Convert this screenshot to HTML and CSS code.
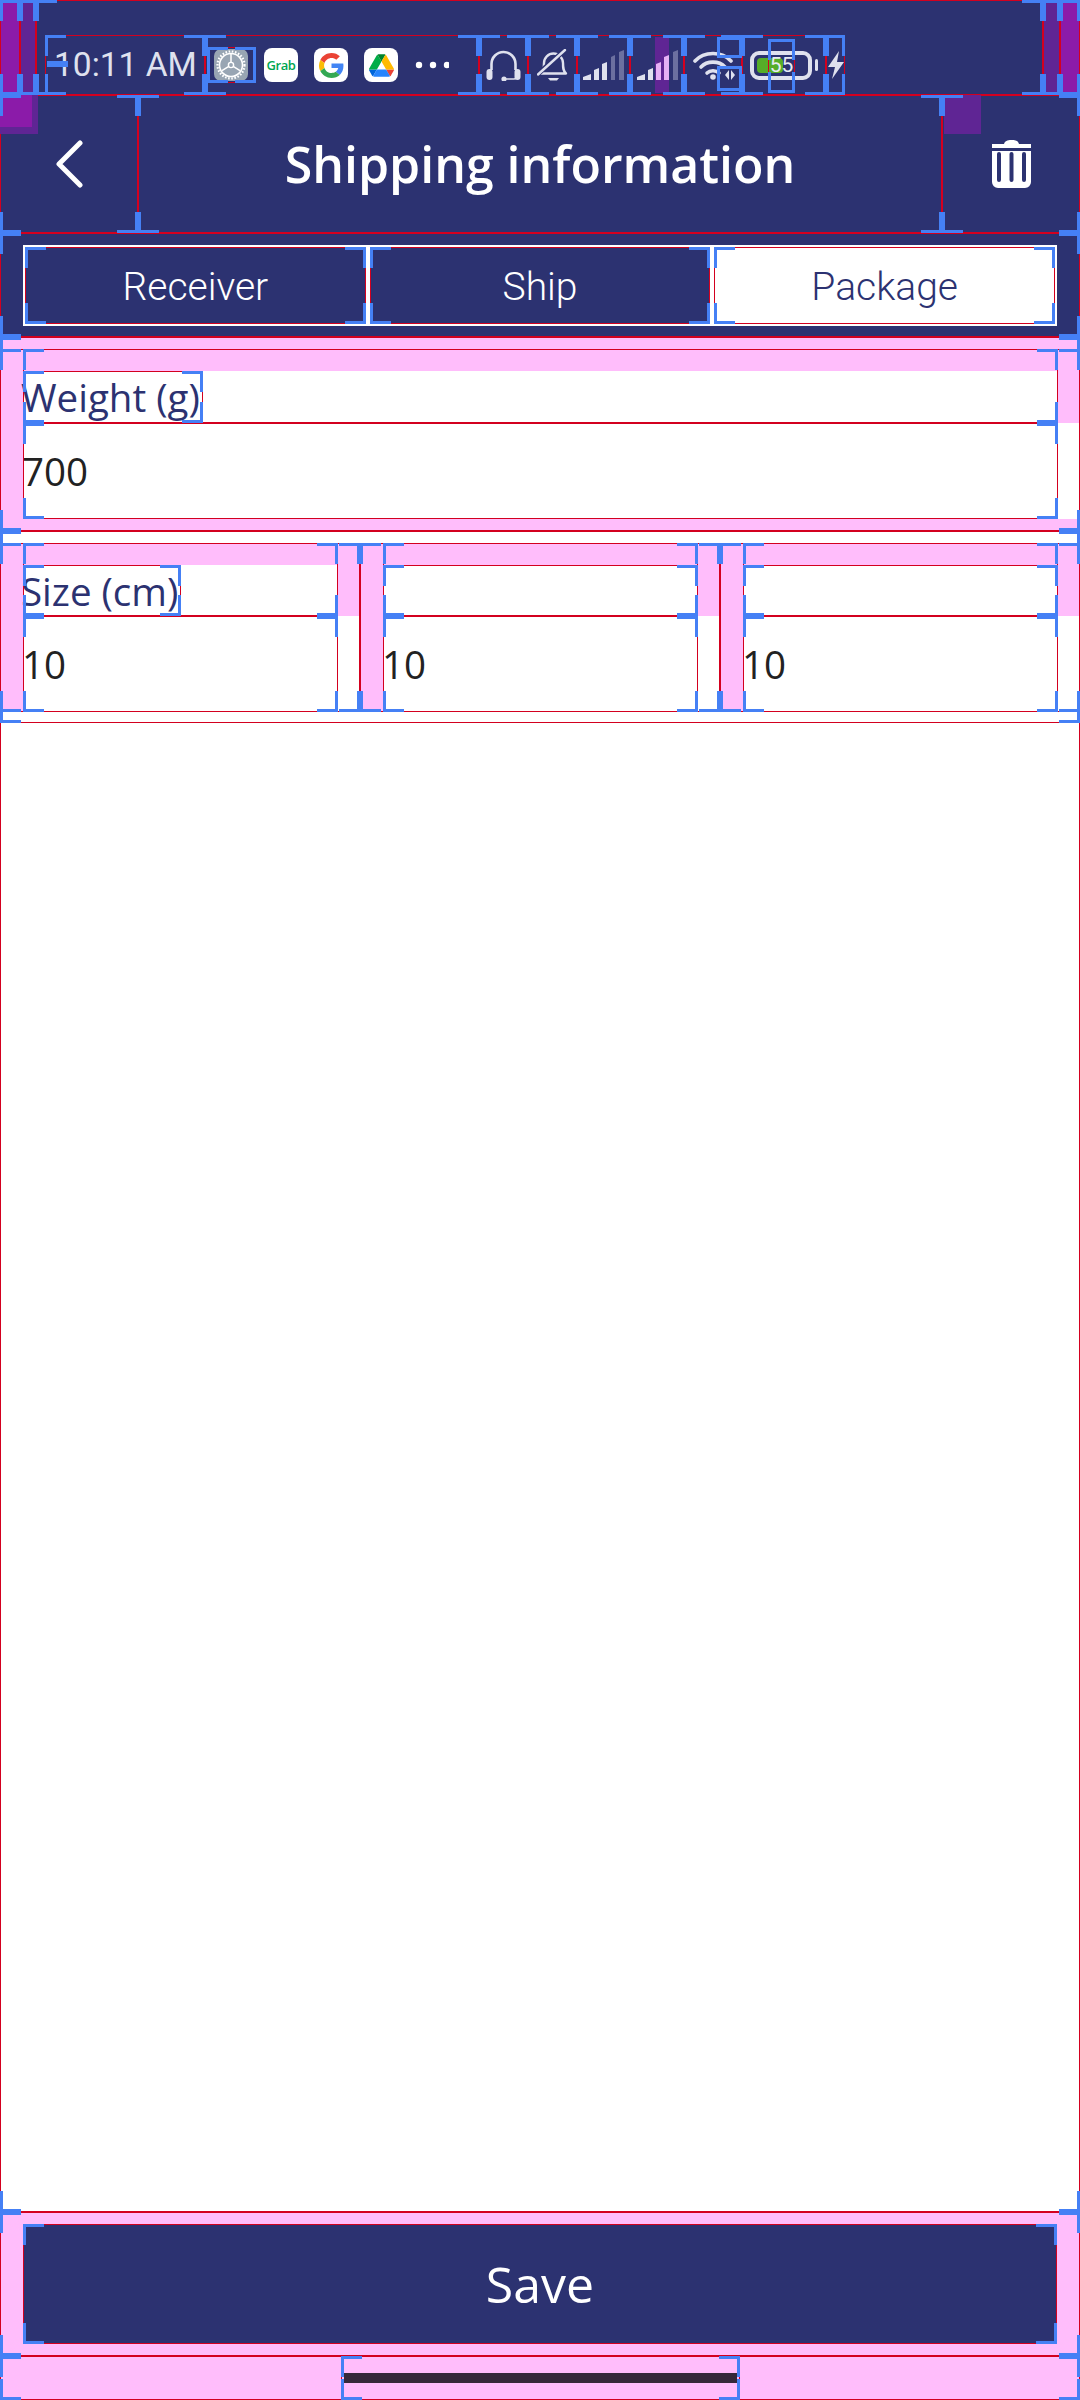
FILE: index.html
```html
<!DOCTYPE html>
<html>
<head>
	<title>Shipping information</title>
	<link rel="stylesheet" href="styles.css">
</head>
<body>
	<div class="screen">
		<div class="status">
			<div class="inset strong w20 box"></div>
			<div class="inset soft w16 box"></div>
			<div class="status-main box">
				<div class="status-row box">
					<div class="time box">10:11 AM<i class="tick"></i></div>
					<div class="apps box">
						<div class="gear-wrap box">
							<svg class="app" viewBox="0 0 34 32">
								<rect width="34" height="32" rx="7" fill="#98a5b3"/>
								<circle cx="17" cy="16" r="11.500" fill="none" stroke="#fff" stroke-width="1.600"/>
								<circle cx="17" cy="16" r="13.500" fill="none" stroke="#fff" stroke-width="2.200" stroke-dasharray="1.600 1.600"/>
								<circle cx="17" cy="16" r="2.600" fill="none" stroke="#fff" stroke-width="1.400"/>
								<path d="M17 13V5M14.800 17.400 8 21.600M19.200 17.400 26 21.600" stroke="#fff" stroke-width="1.500"/>
							</svg>
						</div>
						<div class="app-tile grab">Grab</div>
						<div class="app-tile">
							<svg class="glyph" viewBox="0 0 48 48">
								<path fill="#EA4335" d="M24 9.5c3.54 0 6.71 1.22 9.21 3.6l6.85-6.85C35.9 2.38 30.47 0 24 0 14.62 0 6.51 5.38 2.56 13.22l7.98 6.19C12.43 13.72 17.74 9.5 24 9.5z"/>
								<path fill="#4285F4" d="M46.98 24.55c0-1.57-.15-3.09-.38-4.55H24v9.02h12.94c-.58 2.96-2.26 5.48-4.78 7.18l7.73 6c4.51-4.18 7.09-10.36 7.09-17.65z"/>
								<path fill="#FBBC05" d="M10.53 28.59c-.48-1.45-.76-2.99-.76-4.59s.27-3.14.76-4.59l-7.98-6.19C.92 16.46 0 20.12 0 24c0 3.88.92 7.54 2.56 10.78l7.97-6.19z"/>
								<path fill="#34A853" d="M24 48c6.48 0 11.93-2.13 15.89-5.81l-7.73-6c-2.15 1.45-4.92 2.3-8.16 2.3-6.26 0-11.57-4.22-13.47-9.91l-7.98 6.19C6.51 42.62 14.62 48 24 48z"/>
							</svg>
						</div>
						<div class="app-tile">
							<svg class="glyph" viewBox="0 0 87.3 78">
								<path d="m6.6 66.85 3.85 6.65c.8 1.4 1.95 2.5 3.3 3.3l13.75-23.8h-27.5c0 1.55.4 3.1 1.2 4.5z" fill="#0066da"/>
								<path d="m43.65 25-13.75-23.8c-1.35.8-2.5 1.9-3.3 3.3l-25.4 44a9.06 9.06 0 0 0 -1.2 4.5h27.5z" fill="#00ac47"/>
								<path d="m73.55 76.8c1.35-.8 2.5-1.9 3.3-3.3l1.6-2.75 7.65-13.25c.8-1.4 1.2-2.95 1.2-4.5h-27.502l5.852 11.5z" fill="#ea4335"/>
								<path d="m43.65 25 13.75-23.8c-1.35-.8-2.9-1.2-4.5-1.2h-18.5c-1.6 0-3.15.45-4.5 1.2z" fill="#00832d"/>
								<path d="m59.8 53h-32.3l-13.75 23.8c1.35.8 2.9 1.2 4.5 1.2h50.8c1.6 0 3.15-.45 4.5-1.2z" fill="#2684fc"/>
								<path d="m73.4 26.5-12.7-22c-.8-1.4-1.95-2.5-3.3-3.3l-13.75 23.8 16.15 28h27.45c0-1.55-.4-3.1-1.2-4.5z" fill="#ffba00"/>
							</svg>
						</div>
						<svg class="dots" viewBox="0 0 34 8">
							<circle cx="4" cy="4" r="3.2"/>
							<circle cx="18" cy="4" r="3.2"/>
							<circle cx="32" cy="4" r="3.2"/>
						</svg>
					</div>
					<div class="cell w49 box">
						<svg class="ic-headset" viewBox="0 0 35 32">
							<path d="M5.5 21V15a12 12 0 0 1 24 0v6" fill="none" stroke="#dfe1ee" stroke-width="2.6"/>
							<rect x="0.5" y="20" width="6" height="11" rx="3" fill="#dfe1ee"/>
							<rect x="28.5" y="20" width="6" height="11" rx="3" fill="#dfe1ee"/>
							<circle cx="18" cy="30" r="2.6" fill="#dfe1ee"/>
							<path d="M18 30h10a3 3 0 0 0 3-3" fill="none" stroke="#dfe1ee" stroke-width="1.6"/>
						</svg>
					</div>
					<div class="cell w49 box">
						<svg class="ic-bell" viewBox="0 0 32 32">
							<path d="M4 24.5c3-2.5 3-6 3-10.500a9.500 9.500 0 0 1 19 0c0 4.500 0 8 3 10.500z" fill="none" stroke="#dfe1ee" stroke-width="2.400" stroke-linejoin="round"/>
							<path d="M11 29h11l-2 2.500h-7z" fill="#dfe1ee"/>
							<path d="M1 25 28 1" stroke="#2c3271" stroke-width="5"/>
							<path d="M1 25.500 28 1" stroke="#dfe1ee" stroke-width="2.400" stroke-linecap="round"/>
						</svg>
					</div>
					<div class="cell w53 box">
						<svg class="ic-signal" viewBox="0 0 41 30">
							<path fill="#dfe1ee" d="M0 30V27L8 24V30ZM11 30V20L16 18V30ZM19 30V14L24 12V30Z"/>
							<path fill="#6c70a0" d="M28 30V7L32 5V30ZM36 30V2L41 0V30Z"/>
						</svg>
					</div>
					<div class="cell w54 box">
						<svg class="ic-signal" viewBox="0 0 41 30">
							<rect x="18" y="-13" width="14" height="56" fill="#5f2594"/>
							<path fill="#dfe1ee" d="M0 30V27L8 24V30ZM11 30V20L16 18V30Z"/>
							<path fill="#e6b0f5" d="M19 30V14L24 12V30ZM27 30V7L32 5V30Z"/>
							<path fill="#6c70a0" d="M36 30V2L41 0V30Z"/>
						</svg>
					</div>
					<div class="cell w58 box">
						<svg class="ic-wifi" viewBox="0 0 40 30">
							<g fill="none" stroke="#dfe1ee" stroke-width="3.600" stroke-linecap="round">
								<path d="M2 11C11 1 29 1 38 11"/>
								<path d="M8 17c6-6.500 18-6.500 24 0"/>
								<path d="M14 23c3-3 9-3 12 0"/>
							</g>
							<circle cx="20" cy="27" r="2.800" fill="#dfe1ee"/>
						</svg>
						<div class="wifi-tag">
							<div class="wifi-top box"></div>
							<div class="wifi-low box">
								<svg class="ic-arrows" viewBox="0 0 12 10">
									<path d="M5 0V10L1 5ZM7 0V10L11 5Z" fill="#dfe1ee"/>
								</svg>
							</div>
						</div>
					</div>
					<div class="cell w84 box">
						<div class="battery">
							<div class="battery-fill"></div>
							<div class="battery-num box">55</div>
						</div>
						<div class="battery-nub"></div>
					</div>
					<div class="cell w19 box">
						<svg class="ic-bolt" viewBox="0 0 16 28">
							<path d="M11 0 0 16H7L4 28 16 11H9Z" fill="#dfe1ee"/>
						</svg>
					</div>
				</div>
			</div>
			<div class="inset soft w17 box"></div>
			<div class="inset strong w20 box"></div>
		</div>

		<div class="header">
			<div class="head-side w138 box">
				<svg class="ic-back" viewBox="0 0 28 48">
					<path d="M25 3 4 24 25 45" fill="none" stroke="#fff" stroke-width="5" stroke-linecap="round" stroke-linejoin="round"/>
				</svg>
				<i class="flag-left"></i>
			</div>
			<div class="head-title box">Shipping information</div>
			<div class="head-side w138 box">
				<i class="flag-right"></i>
				<svg class="ic-trash" viewBox="0 0 39 48">
					<path d="M0 4H12C13 1 15 0 19.500 0S26 1 27 4H39V8H0Z" fill="#fff"/>
					<path fill="#fff" fill-rule="evenodd" d="M0 11H39V42a6 6 0 0 1-6 6H6a6 6 0 0 1-6-6ZM5 14V40a2 2 0 0 0 4 0V14a2 2 0 0 0-4 0ZM17.500 14V40a2 2 0 0 0 4 0V14a2 2 0 0 0-4 0ZM30 14V40a2 2 0 0 0 4 0V14a2 2 0 0 0-4 0Z"/>
				</svg>
			</div>
		</div>

		<div class="tabs-bar box">
			<div class="tabs">
				<div class="tab first box">Receiver</div>
				<div class="tab box">Ship</div>
				<div class="tab active box">Package</div>
			</div>
		</div>

		<div class="form box">
			<div class="form-top box">
				<div class="field box">
					<div class="field-head box">
						<div class="label-row tall"><span class="label box">Weight (g)</span></div>
					</div>
					<div class="field-body"><div class="input box">700</div></div>
				</div>
			</div>
			<div class="size-row box">
				<div class="field box">
					<div class="field-head box">
						<div class="label-row"><span class="label box">Size (cm)</span></div>
					</div>
					<div class="field-body"><div class="input box">10</div></div>
				</div>
				<div class="field box">
					<div class="field-head box">
						<div class="label-row box"></div>
					</div>
					<div class="field-body"><div class="input box">10</div></div>
				</div>
				<div class="field box">
					<div class="field-head box">
						<div class="label-row box"></div>
					</div>
					<div class="field-body"><div class="input box">10</div></div>
				</div>
			</div>
		</div>

		<div class="actions box">
			<div class="save box">Save</div>
		</div>
		<div class="home box">
			<div class="home-hit box"><div class="home-bar"></div></div>
		</div>
	</div>
</body>
</html>
```

FILE: styles.css
```css
* {
	padding: 0;
	margin: 0;
	box-sizing: border-box;
}

body {
	width: 1080px;
	height: 2400px;
	overflow: hidden;
	background: #fff;
}

.screen {
	width: 1080px;
	height: 2400px;
	display: flex;
	flex-direction: column;
	font-family: "Open Sans", sans-serif;
}

/* layout bounds overlay: red edge + blue corners */
.box {
	position: relative;
}

.box::before {
	content: "";
	position: absolute;
	inset: 0;
	border: 1px solid #d3001f;
	pointer-events: none;
}

.box::after {
	content: "";
	position: absolute;
	inset: 0;
	pointer-events: none;
	background:
		linear-gradient(#4580f5, #4580f5) left top / 21px 3px no-repeat,
		linear-gradient(#4580f5, #4580f5) left top / 3px 21px no-repeat,
		linear-gradient(#4580f5, #4580f5) right top / 21px 3px no-repeat,
		linear-gradient(#4580f5, #4580f5) right top / 3px 21px no-repeat,
		linear-gradient(#4580f5, #4580f5) left bottom / 21px 3px no-repeat,
		linear-gradient(#4580f5, #4580f5) left bottom / 3px 21px no-repeat,
		linear-gradient(#4580f5, #4580f5) right bottom / 21px 3px no-repeat,
		linear-gradient(#4580f5, #4580f5) right bottom / 3px 21px no-repeat;
}

/* status bar */
.status {
	height: 95px;
	display: flex;
	background: #2c3271;
	flex: none;
}

.inset {
	height: 95px;
	flex: none;
}

.strong { background: #8b1ba9; }
.soft { background: #5f2594; }
.w16 { width: 16px; }
.w17 { width: 17px; }
.w20 { width: 20px; }

.status-main {
	flex: 1;
	padding: 35px 0 0 9px;
}

.status-row {
	width: 800px;
	height: 60px;
	display: flex;
	align-items: center;
}

.time {
	width: 160px;
	height: 60px;
	padding-left: 9px;
	font-family: Roboto, sans-serif;
	font-size: 33.5px;
	line-height: 60px;
	color: #dfe1ee;
	white-space: nowrap;
}

.tick {
	position: absolute;
	left: 2px;
	top: 26px;
	width: 21px;
	height: 6px;
	background: #4580f5;
}

.apps {
	width: 274px;
	height: 60px;
	display: flex;
	align-items: center;
}

.gear-wrap {
	width: 49px;
	height: 36px;
	margin: 0 8px 0 2px;
	padding: 2px 0 0 7px;
}

.app {
	display: block;
	width: 34px;
	height: 32px;
}

.app-tile {
	width: 34px;
	height: 34px;
	margin-right: 16px;
	border-radius: 8px;
	background: #fff;
	display: flex;
	align-items: center;
	justify-content: center;
}

.grab {
	font-family: "Open Sans", sans-serif;
	font-size: 13px;
	font-weight: 600;
	letter-spacing: -0.4px;
	color: #00a651;
}

.glyph {
	width: 25px;
	height: 25px;
}

.dots {
	width: 34px;
	height: 8px;
	margin-left: 1px;
	fill: #fff;
}

.cell {
	height: 60px;
	flex: none;
	display: flex;
	align-items: center;
	justify-content: center;
}

.w19 { width: 19px; }
.w49 { width: 49px; }
.w53 { width: 53px; }
.w54 { width: 54px; }
.w58 { width: 58px; justify-content: flex-start; padding-left: 9px; }
.w84 { width: 84px; }

.ic-headset { width: 35px; height: 32px; }
.ic-bell { width: 32px; height: 32px; }
.ic-signal { width: 41px; height: 30px; overflow: visible; }
.ic-wifi { width: 40px; height: 30px; }
.ic-bolt { width: 16px; height: 28px; flex: none; }

.wifi-tag {
	position: absolute;
	left: 33px;
	top: 2px;
	width: 25px;
	height: 54px;
	display: flex;
	flex-direction: column;
	gap: 8px;
}

.wifi-top {
	height: 21px;
}

.wifi-low {
	flex: 1;
	display: flex;
	justify-content: center;
	padding-top: 4px;
}

.ic-arrows {
	width: 12px;
	height: 10px;
}

.battery {
	position: relative;
	width: 62px;
	height: 29px;
	border: 4px solid #dfe1ee;
	border-radius: 9px;
}

.battery-fill {
	position: absolute;
	left: 3px;
	top: 3px;
	width: 26px;
	height: 15px;
	border-radius: 4px;
	background: #56ad28;
}

.battery-num {
	position: absolute;
	left: 14px;
	top: -16px;
	width: 27px;
	height: 54px;
	font-family: Roboto, sans-serif;
	font-size: 21px;
	line-height: 53px;
	text-align: center;
	color: #e8eaf4;
}

.battery-nub {
	width: 3px;
	height: 12px;
	margin-left: 3px;
	border-radius: 2px;
	background: #dfe1ee;
}

/* header */
.header {
	height: 138px;
	display: flex;
	background: #2c3271;
	flex: none;
}

.head-side {
	height: 138px;
	flex: none;
	display: flex;
	align-items: center;
	justify-content: center;
}

.w138 { width: 138px; }

.ic-back {
	width: 28px;
	height: 48px;
}

.ic-trash {
	width: 39px;
	height: 48px;
}

.flag-left,
.flag-right {
	position: absolute;
	top: 0;
	height: 39px;
	background: #5f2594;
}

.flag-left {
	left: 0;
	width: 38px;
	background: linear-gradient(#8b1ba9, #8b1ba9) 0 0 / 32px 32px no-repeat, #5f2594;
}

.flag-right {
	left: 2px;
	width: 37px;
}

.head-title {
	flex: 1;
	height: 138px;
	font-size: 50px;
	font-weight: 600;
	line-height: 138px;
	text-align: center;
	color: #fff;
	white-space: nowrap;
}

/* tabs */
.tabs-bar {
	height: 104px;
	padding: 12px 23px 11px;
	background: #2c3271;
	flex: none;
}

.tabs {
	height: 81px;
	display: flex;
	padding: 2px 0;
	background: #fff;
}

.tab {
	flex: 1;
	display: flex;
	align-items: center;
	justify-content: center;
	padding-top: 3px;
	border: solid transparent;
	border-width: 0 2px;
	background: #2c3271;
	background-clip: padding-box;
	font-family: Roboto, sans-serif;
	font-size: 39px;
	font-weight: 300;
	color: #fff;
}

.tab.first {
	border-radius: 8px 0 0 8px;
}

.tab.active {
	background: #fff;
	color: #2c3271;
}

/* form */
.form {
	flex: 1;
	background: #fff;
}

.form-top {
	padding-top: 12px;
	background: #ffbdfb;
}

.size-row {
	display: flex;
	padding: 12px 0 11px;
	background: #fff;
}

.size-row .field {
	flex: 1;
	padding-bottom: 0;
}

.field {
	padding: 0 0 12px 23px;
	background: #ffbdfb;
}

.field-head {
	margin-right: 22px;
	padding-top: 22px;
}

.label-row {
	height: 51px;
	background: #fff;
	display: flex;
}

.label-row.tall {
	height: 52px;
}

.label {
	height: 100%;
	padding-right: 3px;
	text-indent: -2px;
	color: #2c3271;
	font-size: 38.5px;
	line-height: 52px;
	white-space: nowrap;
}

.field-body {
	background: #fff;
}

.input {
	height: 96px;
	margin-right: 22px;
	text-indent: -1px;
	color: #222;
	font-size: 38.5px;
	line-height: 97px;
}

/* bottom */
.actions {
	height: 144px;
	padding: 12px 23px;
	background: #ffbdfb;
	flex: none;
}

.save {
	height: 120px;
	background: #2c3271;
	color: #fff;
	font-size: 50px;
	line-height: 121px;
	text-align: center;
}

.home {
	height: 44px;
	background: #ffbdfb;
	flex: none;
	display: flex;
	justify-content: center;
}

.home-hit {
	width: 399px;
	height: 44px;
	padding: 17px 3px 0;
}

.home-bar {
	height: 10px;
	background: #35283a;
}
```
